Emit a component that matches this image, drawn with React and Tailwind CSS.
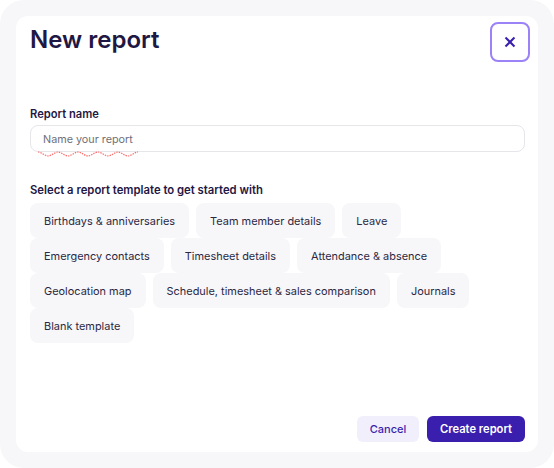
const templates = [
  'Birthdays & anniversaries',
  'Team member details',
  'Leave',
  'Emergency contacts',
  'Timesheet details',
  'Attendance & absence',
  'Geolocation map',
  'Schedule, timesheet & sales comparison',
  'Journals',
  'Blank template',
];

const App = () => {
  return (
    <div className="w-[554px] h-[468px] bg-white font-['Inter',sans-serif]">
      <div className="w-full h-full rounded-3xl bg-[#f7f7fa] p-4">
        <div className="w-full h-full rounded-xl bg-white pl-3.5 pr-[13px] flex flex-col">
          <div className="flex justify-between items-start pt-1.5 -mr-[5px] h-[47px] shrink-0">
            <h1 className="text-2xl leading-9 font-semibold text-[#1f1744]">New report</h1>
            <button className="w-10 h-10 flex items-center justify-center rounded-lg border-2 border-[#9b82f7] text-[#3a1fae]">
              <svg width="12" height="12" viewBox="0 0 12 12" fill="none" stroke="currentColor" strokeWidth="2">
                <path d="M1.5 1.5l9 9" />
                <path d="M10.5 1.5l-9 9" />
              </svg>
            </button>
          </div>

          <label className="mt-[43px] text-[11.2px] leading-4 font-semibold text-[#1f1744]">Report name</label>
          <div className="relative mt-[3px]">
            <input
              placeholder="Name your report"
              className="block w-full h-[27px] rounded-lg border border-[#e6e6ea] bg-white px-3 pt-px text-[10.8px] text-[#1f1744] placeholder:text-[#6f6f78] outline-none"
            />
            <svg className="absolute left-2 top-[26px]" width="100" height="7" viewBox="0 0 100 7" fill="none" stroke="#ff6b6b" strokeWidth="1.2" strokeDasharray="1.5 1">
              <path d="M0 1C3 1 7 5 10 5S17 1 20 1 27 5 30 5 37 1 40 1 47 5 50 5 57 1 60 1 67 5 70 5 77 1 80 1 87 5 90 5 97 1 100 1" />
            </svg>
          </div>

          <h2 className="mt-[30px] text-[11.3px] leading-4 font-semibold text-[#1f1744]">Select a report template to get started with</h2>
          <div className="mt-[5px] flex flex-wrap gap-x-[7px]">
            {templates.map((name) => (
              <button key={name} className="h-[35px] rounded-lg bg-[#f7f7fa] px-3.5 pt-px text-[10.95px] text-[#2b2842]">
                {name}
              </button>
            ))}
          </div>

          <div className="mt-auto mb-2.5 flex justify-end gap-2">
            <button className="h-[26px] w-[62px] rounded-md bg-[#f1effb] text-[11px] font-medium text-[#3a1fae]">Cancel</button>
            <button className="h-[26px] w-[98px] rounded-md bg-[#3a1fae] text-[11.2px] font-semibold text-white">Create report</button>
          </div>
        </div>
      </div>
    </div>
  );
};

export default App;
